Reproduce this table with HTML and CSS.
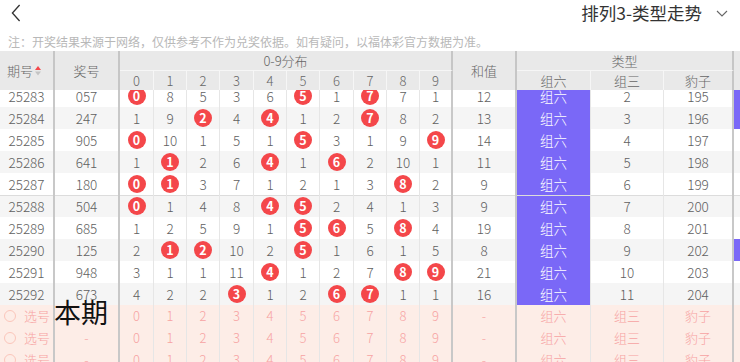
FILE: index.html
```html
<!DOCTYPE html>
<html lang="zh-CN">
<head>
<meta charset="utf-8">
<title>排列3-类型走势</title>
<link rel="stylesheet" href="styles.css">
</head>
<body>
<header class="topbar">
  <svg class="back" width="10" height="18" viewBox="0 0 10 18"><path d="M8.6 1 L1.4 9 L8.6 17" fill="none" stroke="#333" stroke-width="1.3"/></svg>
  <div class="title">排列3-类型走势<svg class="caret" width="12" height="7" viewBox="0 0 12 7"><path d="M1 1 L6 6 L11 1" fill="none" stroke="#666" stroke-width="1.1"/></svg></div>
</header>
<p class="note">注：开奖结果来源于网络，仅供参考不作为兑奖依据。如有疑问，以福体彩官方数据为准。</p>
<div class="board">
  <table class="head">
    <colgroup><col class="c1"><col class="c2"><col class="d4"><col class="d3"><col class="d3"><col class="d4"><col class="d3"><col class="d3"><col class="d4"><col class="d3"><col class="d3"><col class="d3"><col class="c3"><col class="c4"><col class="c5"><col class="c6"><col class="c7"></colgroup>
    <tr class="h1">
      <th rowspan="2" class="g"><span class="sort">期号<svg width="6" height="10" viewBox="0 0 6 10"><path d="M3 0 L6 4 L0 4 Z" fill="#f4474a"/><path d="M0 5.5 L6 5.5 L3 9.5 Z" fill="#c4c4c4"/></svg></span></th>
      <th rowspan="2" class="g">奖号</th>
      <th colspan="10" class="g top">0-9分布</th>
      <th rowspan="2" class="g">和值</th>
      <th colspan="3" class="g top">类型</th>
      <th rowspan="2"></th>
    </tr>
    <tr class="h2">
      <th>0</th><th>1</th><th>2</th><th>3</th><th>4</th><th>5</th><th>6</th><th>7</th><th>8</th><th class="g">9</th>
      <th>组六</th><th>组三</th><th class="g">豹子</th>
    </tr>
  </table>
  <div class="clip">
    <table class="rows">
      <colgroup><col class="c1"><col class="c2"><col class="d4"><col class="d3"><col class="d3"><col class="d4"><col class="d3"><col class="d3"><col class="d4"><col class="d3"><col class="d3"><col class="d3"><col class="c3"><col class="c4"><col class="c5"><col class="c6"><col class="c7"></colgroup>
      <tr><td class="g">25283</td><td class="g">057</td><td><b class="ball">0</b></td><td>8</td><td>5</td><td>3</td><td>6</td><td><b class="ball">5</b></td><td>1</td><td><b class="ball">7</b></td><td>7</td><td class="g">1</td><td class="g">12</td><td class="zl">组六</td><td>2</td><td class="g">195</td><td class="zl"></td></tr>
      <tr class="alt"><td class="g">25284</td><td class="g">247</td><td>1</td><td>9</td><td><b class="ball">2</b></td><td>4</td><td><b class="ball">4</b></td><td>1</td><td>2</td><td><b class="ball">7</b></td><td>8</td><td class="g">2</td><td class="g">13</td><td class="zl">组六</td><td>3</td><td class="g">196</td><td class="zl"></td></tr>
      <tr><td class="g">25285</td><td class="g">905</td><td><b class="ball">0</b></td><td>10</td><td>1</td><td>5</td><td>1</td><td><b class="ball">5</b></td><td>3</td><td>1</td><td>9</td><td class="g"><b class="ball">9</b></td><td class="g">14</td><td class="zl">组六</td><td>4</td><td class="g">197</td><td></td></tr>
      <tr class="alt"><td class="g">25286</td><td class="g">641</td><td>1</td><td><b class="ball">1</b></td><td>2</td><td>6</td><td><b class="ball">4</b></td><td>1</td><td><b class="ball">6</b></td><td>2</td><td>10</td><td class="g">1</td><td class="g">11</td><td class="zl">组六</td><td>5</td><td class="g">198</td><td></td></tr>
      <tr><td class="g">25287</td><td class="g">180</td><td><b class="ball">0</b></td><td><b class="ball">1</b></td><td>3</td><td>7</td><td>1</td><td>2</td><td>1</td><td>3</td><td><b class="ball">8</b></td><td class="g">2</td><td class="g">9</td><td class="zl">组六</td><td>6</td><td class="g">199</td><td></td></tr>
      <tr class="alt sep"><td class="g">25288</td><td class="g">504</td><td><b class="ball">0</b></td><td>1</td><td>4</td><td>8</td><td><b class="ball">4</b></td><td><b class="ball">5</b></td><td>2</td><td>4</td><td>1</td><td class="g">3</td><td class="g">9</td><td class="zl">组六</td><td>7</td><td class="g">200</td><td></td></tr>
      <tr><td class="g">25289</td><td class="g">685</td><td>1</td><td>2</td><td>5</td><td>9</td><td>1</td><td><b class="ball">5</b></td><td><b class="ball">6</b></td><td>5</td><td><b class="ball">8</b></td><td class="g">4</td><td class="g">19</td><td class="zl">组六</td><td>8</td><td class="g">201</td><td></td></tr>
      <tr class="alt"><td class="g">25290</td><td class="g">125</td><td>2</td><td><b class="ball">1</b></td><td><b class="ball">2</b></td><td>10</td><td>2</td><td><b class="ball">5</b></td><td>1</td><td>6</td><td>1</td><td class="g">5</td><td class="g">8</td><td class="zl">组六</td><td>9</td><td class="g">202</td><td class="zl"></td></tr>
      <tr><td class="g">25291</td><td class="g">948</td><td>3</td><td>1</td><td>1</td><td>11</td><td><b class="ball">4</b></td><td>1</td><td>2</td><td>7</td><td><b class="ball">8</b></td><td class="g"><b class="ball">9</b></td><td class="g">21</td><td class="zl">组六</td><td>10</td><td class="g">203</td><td></td></tr>
      <tr class="alt"><td class="g">25292</td><td class="g">673</td><td>4</td><td>2</td><td>2</td><td><b class="ball">3</b></td><td>1</td><td>2</td><td><b class="ball">6</b></td><td><b class="ball">7</b></td><td>1</td><td class="g">1</td><td class="g">16</td><td class="zl">组六</td><td>11</td><td class="g">204</td><td></td></tr>
      <tr class="pick"><td class="g pk"><i class="radio"></i>选号</td><td class="g">-</td><td>0</td><td>1</td><td>2</td><td>3</td><td>4</td><td>5</td><td>6</td><td>7</td><td>8</td><td class="g">9</td><td class="g">-</td><td>组六</td><td>组三</td><td class="g">豹子</td><td></td></tr>
      <tr class="pick"><td class="g pk"><i class="radio"></i>选号</td><td class="g">-</td><td>0</td><td>1</td><td>2</td><td>3</td><td>4</td><td>5</td><td>6</td><td>7</td><td>8</td><td class="g">9</td><td class="g">-</td><td>组六</td><td>组三</td><td class="g">豹子</td><td></td></tr>
      <tr class="pick"><td class="g pk"><i class="radio"></i>选号</td><td class="g">-</td><td>0</td><td>1</td><td>2</td><td>3</td><td>4</td><td>5</td><td>6</td><td>7</td><td>8</td><td class="g">9</td><td class="g">-</td><td>组六</td><td>组三</td><td class="g">豹子</td><td></td></tr>
    </table>
  </div>
  <div class="current">本期</div>
</div>
</body>
</html>
```

FILE: styles.css
```css
* { box-sizing: border-box; }
html, body { margin: 0; padding: 0; overflow: hidden; background: #fff; }
body {
  width: 740px;
  height: 362px;
  font-family: "Noto Sans CJK SC", "Noto Sans", sans-serif;
  color: #666;
}
.topbar {
  height: 25px;
  display: flex;
  align-items: center;
  justify-content: space-between;
  padding: 0 12px 0 11px;
}
.back { display: block; margin-top: 1px; }
.title {
  display: flex;
  align-items: center;
  gap: 14px;
  font-size: 17.5px;
  line-height: 25px;
  color: #333;
}
.caret { display: block; margin-top: 2px; }
.note {
  margin: 0;
  padding: 9px 0 1px 8px;
  font-size: 12px;
  line-height: 16px;
  color: #b8b8b8;
  white-space: nowrap;
}
.board { position: relative; width: 814px; }
table {
  border-collapse: separate;
  border-spacing: 0;
  table-layout: fixed;
  width: 814px;
}
col.c1 { width: 55px; }
col.c2 { width: 65px; }
col.d4 { width: 34px; }
col.d3 { width: 33px; }
col.c3 { width: 64px; }
col.c4 { width: 74px; }
col.c5 { width: 73px; }
col.c6 { width: 70px; }
col.c7 { width: 80px; }
th, td {
  padding: 0;
  text-align: center;
  white-space: nowrap;
  overflow: hidden;
}
.head th {
  background: #e9e9e9;
  font-weight: 300;
  font-size: 13px;
  color: #666;
  border-right: 1px solid #f6f6f6;
}
.head .h1 { height: 20px; }
.head .h1 th.top { border-bottom: 1px solid #f6f6f6; line-height: 19px; }
.head .h2 { height: 19px; }
.head .h2 th { line-height: 19px; }
.head th.g { border-right: 2px solid #c6c6c6; }
.sort {
  display: inline-flex;
  align-items: center;
  gap: 2px;
  padding-right: 5px;
}
.sort svg { display: block; }
.clip { overflow: hidden; }
.rows { margin-top: -5px; }
.rows tr { height: 22px; }
.rows td {
  height: 22px;
  line-height: 22px;
  font-size: 13.5px;
  font-weight: 300;
  color: #5f5f5f;
  background: #fff;
  border-right: 1px solid #e6e6e6;
}
.rows td.g { border-right: 2px solid #c8c8c8; }
.rows tr.alt td { background: #f5f5f5; }
.rows tr.sep td { box-shadow: inset 0 1px 0 #dcdcdc; }
.rows td.zl, .rows tr.alt td.zl { background: #7a68f7; color: #fff; }
.ball {
  display: inline-block;
  vertical-align: top;
  margin-top: 2px;
  width: 18px;
  height: 18px;
  border-radius: 50%;
  background: #f4474a;
  color: #fff;
  font-size: 12.5px;
  font-weight: bold;
  line-height: 18px;
  text-align: center;
}
.rows tr.pick td {
  background: #fdede7;
  color: #f7a3a3;
  font-size: 13px;
}
.rows td.pk { text-align: left; padding-left: 4px; }
.radio {
  display: inline-block;
  vertical-align: top;
  margin-top: 5px;
  margin-right: 8px;
  width: 12px;
  height: 12px;
  border: 1px solid #fbc6bb;
  border-radius: 50%;
}
.current {
  position: absolute;
  left: 54px;
  top: 247px;
  font-size: 27px;
  line-height: 27px;
  font-weight: 400;
  color: #111;
}
```
